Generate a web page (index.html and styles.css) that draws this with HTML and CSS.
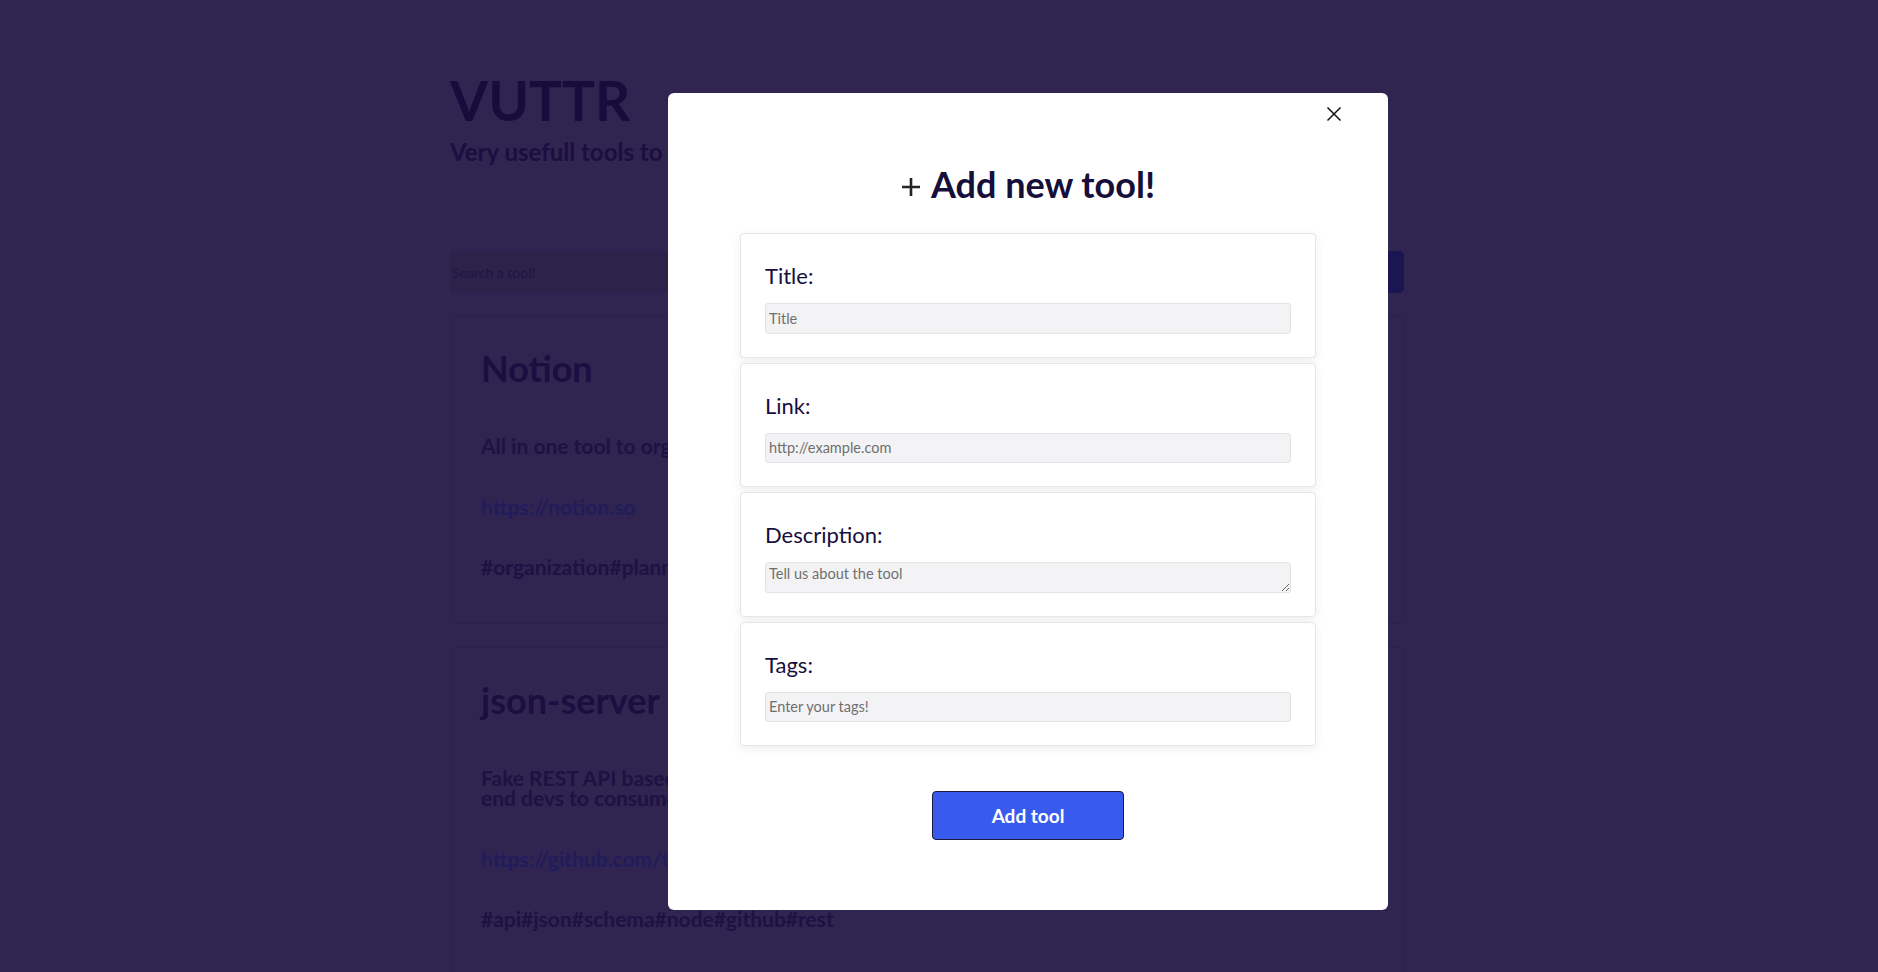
FILE: index.html
```html
<!DOCTYPE html>
<html lang="en">
<head>
<meta charset="utf-8">
<title>VUTTR</title>
<link rel="stylesheet" href="styles.css">
</head>
<body>
<div class="page">
  <header class="header">
    <h1 class="brand">VUTTR</h1>
    <p class="tagline">Very usefull tools to remember</p>
  </header>
  <div class="search-row">
    <input class="search-input" type="text" placeholder="Search a tool!">
    <button class="search-btn" type="button">+ Add</button>
  </div>
  <ul class="tool-list">
    <li class="tool-card">
      <h2 class="tool-title">Notion</h2>
      <p class="tool-desc">All in one tool to organize teams and ideas. Write, plan, collaborate, and get organized.</p>
      <a class="tool-link" href="#">https://notion.so</a>
      <p class="tool-tags">#organization#planning#collaboration#writing#calendar</p>
    </li>
    <li class="tool-card">
      <h2 class="tool-title">json-server</h2>
      <p class="tool-desc">Fake REST API based on a json schema. Useful for mocking and creating APIs for front-<br>end devs to consume in coding challenges.</p>
      <a class="tool-link" href="#">https://github.com/typicode/json-server</a>
      <p class="tool-tags">#api#json#schema#node#github#rest</p>
    </li>
  </ul>
</div>

<div class="overlay">
  <div class="modal">
    <button class="close-btn" type="button" aria-label="Close">
      <svg width="16" height="16" viewBox="0 0 16 16"><path d="M1.5 1.5 L14.5 14.5 M14.5 1.5 L1.5 14.5" stroke="#111" stroke-width="1.5" fill="none"/></svg>
    </button>
    <h2 class="modal-title">
      <svg class="plus-icon" width="20" height="20" viewBox="0 0 20 20"><path d="M10 1 V19 M1 10 H19" stroke="#232323" stroke-width="2.6" fill="none"/></svg>
      <span>Add new tool!</span>
    </h2>
    <form class="form">
      <div class="field-card">
        <label class="field-label">Title:</label>
        <input class="field-input" type="text" placeholder="Title">
      </div>
      <div class="field-card">
        <label class="field-label">Link:</label>
        <input class="field-input" type="text" placeholder="http://example.com">
      </div>
      <div class="field-card">
        <label class="field-label">Description:</label>
        <textarea class="field-input field-textarea" rows="1" placeholder="Tell us about the tool"></textarea>
      </div>
      <div class="field-card">
        <label class="field-label">Tags:</label>
        <input class="field-input" type="text" placeholder="Enter your tags!">
      </div>
      <div class="form-actions">
        <button class="submit-btn" type="button">Add tool</button>
      </div>
    </form>
  </div>
</div>
</body>
</html>
```

FILE: styles.css
```css
* { box-sizing: border-box; }

html, body {
  margin: 0;
  padding: 0;
  height: 100%;
  overflow: hidden;
}

body {
  background: #302450;
  font-family: "Lato", "Noto Sans", sans-serif;
  color: #190e3e;
}

.page {
  width: 954px;
  margin-left: 450px;
  padding-top: 62px;
}

.header { margin: 0; }

.brand {
  margin: 0;
  font-size: 55px;
  line-height: 76px;
  font-weight: 700;
  color: #170c3c;
}

.tagline {
  margin: 0;
  font-size: 24px;
  line-height: 28px;
  font-weight: 700;
  color: #1a0f40;
}

.search-row {
  display: flex;
  justify-content: space-between;
  margin-top: 85px;
  height: 42px;
}

.search-input {
  width: 300px;
  border: none;
  background: #2d2249;
  font-family: inherit;
  font-size: 14px;
  padding: 0 2px;
  color: #1a0f40;
}
.search-input::placeholder { color: #1f1545; }

.search-btn {
  width: 130px;
  border: none;
  border-radius: 5px;
  background: #1b1551;
  color: #1b1551;
}

.tool-list {
  list-style: none;
  margin: 22px 0 0 2px;
  padding: 0;
}

.tool-card {
  border: 1px solid #2b2149;
  border-radius: 4px;
  padding: 28px 28px 44px;
  margin-bottom: 23px;
}

.tool-title {
  margin: 0;
  font-size: 36px;
  line-height: 48px;
  font-weight: 700;
  color: #1a0f40;
}

.tool-desc {
  margin: 44px 0 0;
  font-size: 21px;
  line-height: 20px;
  font-weight: 700;
  color: #1c1244;
}

.tool-link {
  display: block;
  margin-top: 38px;
  font-size: 21px;
  font-weight: 700;
  color: #211c5c;
  text-decoration: none;
}

.tool-tags {
  margin: 35px 0 0;
  font-size: 21px;
  font-weight: 700;
  color: #1c1244;
}

.overlay {
  position: fixed;
  inset: 0;
}

.modal {
  position: absolute;
  left: 668px;
  top: 93px;
  width: 720px;
  height: 817px;
  background: #ffffff;
  border-radius: 6px;
  padding: 67px 72px 0;
}

.close-btn {
  position: absolute;
  right: 39px;
  top: 6px;
  width: 30px;
  height: 30px;
  border: none;
  background: transparent;
  padding: 0;
  display: flex;
  align-items: center;
  justify-content: center;
}

.modal-title {
  margin: 0;
  display: flex;
  align-items: center;
  justify-content: center;
  gap: 10px;
  font-size: 36px;
  line-height: 48px;
  font-weight: 700;
  color: #150f3a;
}
.plus-icon { margin-top: 6px; }

.form {
  margin-top: 25px;
  display: flex;
  flex-direction: column;
  gap: 5px;
}

.field-card {
  background: #fff;
  border: 1px solid #e6e6e8;
  border-radius: 4px;
  box-shadow: 0 3px 10px rgba(0, 0, 0, 0.07);
  padding: 27px 24px 23px;
  display: flex;
  flex-direction: column;
  height: 124.5px;
}

.field-label {
  font-size: 22px;
  line-height: 30px;
  color: #170f3d;
  margin-bottom: 12px;
}

.field-input {
  height: 32px;
  width: 100%;
  border: 1px solid #e4e4e7;
  border-radius: 3px;
  background: #f3f3f5;
  font-family: inherit;
  font-size: 14.5px;
  padding: 0 3px;
  color: #333;
}
.field-input::placeholder { color: #6f6f6f; }

.field-textarea {
  resize: vertical;
  padding-top: 2px;
  line-height: 18px;
}

.form-actions {
  display: flex;
  justify-content: center;
  margin-top: 40px;
}

.submit-btn {
  width: 192px;
  height: 49px;
  background: #385bee;
  border: 1px solid #1c1b3f;
  border-radius: 4px;
  color: #ffffff;
  font-family: inherit;
  font-size: 19px;
  font-weight: 700;
}
```
